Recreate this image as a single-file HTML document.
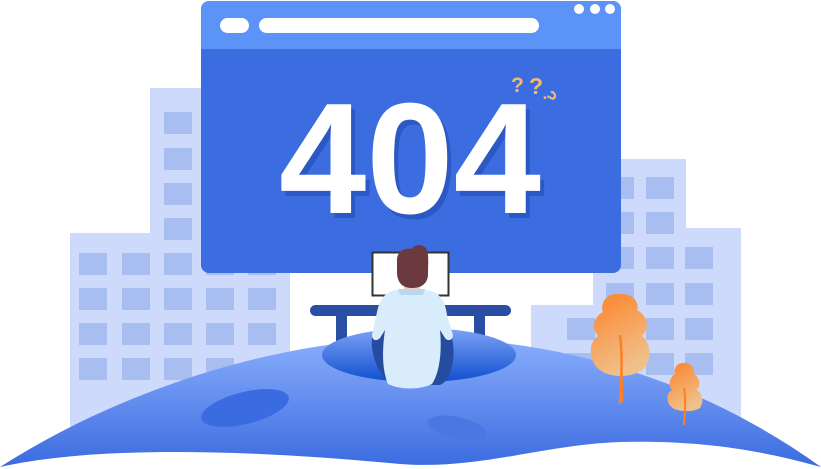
<!DOCTYPE html>
<html><head><meta charset="utf-8"><style>
html,body{margin:0;padding:0;background:#fff;width:821px;height:469px;overflow:hidden}
svg{display:block}
</style></head><body>
<svg width="821" height="469" viewBox="0 0 821 469" xmlns="http://www.w3.org/2000/svg">
<defs>
<linearGradient id="hill" x1="0" y1="0" x2="0" y2="1">
<stop offset="0" stop-color="#8aaefc"/><stop offset="1" stop-color="#3b6be0"/></linearGradient>
<linearGradient id="pit" x1="0" y1="0" x2="0" y2="1">
<stop offset="0" stop-color="#7ea3f5"/><stop offset="1" stop-color="#0f4fd0"/></linearGradient>
<linearGradient id="tree" x1="0" y1="0" x2="0.4" y2="1">
<stop offset="0" stop-color="#fd8229"/><stop offset="1" stop-color="#f0c08a"/></linearGradient>
</defs>
<rect x="150" y="88" width="140" height="300" fill="#cddafc"/>
<rect x="70" y="233" width="217" height="200" fill="#cddafc"/>
<g fill="#a8bef0">
<rect x="164" y="112" width="28" height="22"/><rect x="164" y="148" width="28" height="22"/>
<rect x="164" y="183" width="28" height="22"/><rect x="164" y="218" width="28" height="22"/>
<rect x="79" y="253" width="28" height="22"/><rect x="122" y="253" width="28" height="22"/><rect x="164" y="253" width="28" height="22"/><rect x="206" y="253" width="28" height="22"/><rect x="248" y="253" width="28" height="22"/>
<rect x="79" y="288" width="28" height="22"/><rect x="122" y="288" width="28" height="22"/><rect x="164" y="288" width="28" height="22"/><rect x="206" y="288" width="28" height="22"/><rect x="248" y="288" width="28" height="22"/>
<rect x="79" y="323" width="28" height="22"/><rect x="122" y="323" width="28" height="22"/><rect x="164" y="323" width="28" height="22"/><rect x="206" y="323" width="28" height="22"/><rect x="248" y="323" width="28" height="22"/>
<rect x="79" y="358" width="28" height="22"/><rect x="122" y="358" width="28" height="22"/><rect x="164" y="358" width="28" height="22"/><rect x="206" y="358" width="28" height="22"/>
</g>
<rect x="593" y="159" width="93" height="280" fill="#cddafc"/>
<rect x="593" y="228" width="148" height="211" fill="#cddafc"/>
<rect x="531" y="305" width="80" height="130" fill="#cddafc"/>
<g fill="#a8bef0">
<rect x="606" y="177" width="28" height="22"/><rect x="646" y="177" width="28" height="22"/>
<rect x="606" y="212" width="28" height="22"/><rect x="646" y="212" width="28" height="22"/>
<rect x="606" y="247" width="28" height="22"/><rect x="646" y="247" width="28" height="22"/><rect x="685" y="247" width="28" height="22"/>
<rect x="606" y="283" width="28" height="22"/><rect x="646" y="283" width="28" height="22"/><rect x="685" y="283" width="28" height="22"/>
<rect x="567" y="318" width="28" height="22"/><rect x="606" y="318" width="28" height="22"/><rect x="646" y="318" width="28" height="22"/><rect x="685" y="318" width="28" height="22"/>
<rect x="567" y="353" width="28" height="22"/><rect x="606" y="353" width="28" height="22"/><rect x="646" y="353" width="28" height="22"/><rect x="685" y="353" width="28" height="22"/>
</g>
<rect x="201" y="1" width="420" height="272" rx="8" fill="#3b6de0"/>
<path d="M209,1 H613 A8,8 0 0 1 621,9 V49 H201 V9 A8,8 0 0 1 209,1 Z" fill="#5b93f7"/>
<rect x="220" y="18" width="29" height="15" rx="7.5" fill="#fff"/>
<rect x="259" y="18" width="280" height="15" rx="7.5" fill="#fff"/>
<circle cx="579" cy="9" r="5" fill="#fff"/><circle cx="595" cy="9" r="5" fill="#fff"/><circle cx="610" cy="9" r="5" fill="#fff"/>
<text x="283" y="218" textLength="262" lengthAdjust="spacingAndGlyphs" font-family="Liberation Sans, sans-serif" font-weight="bold" font-size="158" fill="#2b58c2">404</text>
<text x="279" y="213" textLength="262" lengthAdjust="spacingAndGlyphs" font-family="Liberation Sans, sans-serif" font-weight="bold" font-size="158" fill="#fff">404</text>
<text x="511" y="92" font-family="Liberation Sans, sans-serif" font-weight="bold" font-size="21" fill="#f4b872">?</text>
<text x="529" y="94" font-family="Liberation Sans, sans-serif" font-weight="bold" font-size="23" fill="#f4b872">?</text>
<text x="545" y="101" font-family="Liberation Sans, sans-serif" font-weight="bold" font-size="18" fill="#f4b872" transform="rotate(70 549 95)">?</text>
<rect x="310" y="305" width="201" height="11" rx="5.5" fill="#2a4ea3"/>
<rect x="336" y="310" width="11" height="40" fill="#2a4ea3"/>
<rect x="474" y="310" width="11" height="40" fill="#2a4ea3"/>
<rect x="372.5" y="252.5" width="76" height="43" fill="#fff" stroke="#333" stroke-width="2"/>
<path d="M0,467 C120,390 280,338 420,338 C560,338 700,380 821,467 C760,450 700,440 620,442 C540,445 480,470 400,464 C250,450 100,445 0,467 Z" fill="url(#hill)"/>
<ellipse cx="245" cy="408" rx="45" ry="16" transform="rotate(-14 245 408)" fill="#3b6be0"/>
<ellipse cx="457" cy="428" rx="30" ry="11" transform="rotate(12 457 428)" fill="#4a78e2"/>
<ellipse cx="419" cy="355" rx="97" ry="27" fill="url(#pit)"/>
<path d="M372,338 C370,355 380,380 395,385 L440,385 C452,380 456,355 452,338 L440,330 L385,330 Z" fill="#264c9f"/>
<path d="M395,290 L428,290 C440,293 445,300 447,315 L453,335 C453,340 448,342 445,338 L440,330 C442,350 440,372 432,384 C420,390 400,390 388,384 C382,370 382,350 385,330 L380,338 C376,342 372,340 372,335 L377,312 C380,298 385,293 395,290 Z" fill="#d8ecfb"/>
<path d="M398,289 L425,289 L423,295 L400,295 Z" fill="#b9d8f0"/>
<rect x="404" y="278" width="16" height="12" fill="#f4c9b8"/>
<path d="M397,262 C396,252 404,247 412,249 C414,244 424,243 427,250 C429,256 428,265 428,274 C428,283 422,288 412,288 C402,288 397,282 397,272 Z" fill="#6b3a3f"/>
<path d="M620,300 L622,402" stroke="#fd7f2a" stroke-width="2.5" fill="none"/>
<path d="M617,294 C605,294 600,305 603,312 C592,318 592,330 598,336 C588,342 588,362 600,370 C610,378 632,378 642,370 C652,362 652,344 642,336 C650,328 648,316 637,310 C640,300 630,292 617,294 Z" fill="url(#tree)"/>
<path d="M620,335 C622,350 622,375 620,404" stroke="#fd7f2a" stroke-width="2.5" fill="none"/>
<path d="M683,363 C676,363 673,370 675,374 C669,378 668,386 672,390 C665,394 666,404 674,409 C682,412 694,412 700,408 C704,402 703,394 697,390 C701,385 700,378 694,374 C695,367 690,362 683,363 Z" fill="url(#tree)"/>
<path d="M684,388 C686,398 685,412 684,425" stroke="#fd7f2a" stroke-width="2" fill="none"/>
</svg>
</body></html>
